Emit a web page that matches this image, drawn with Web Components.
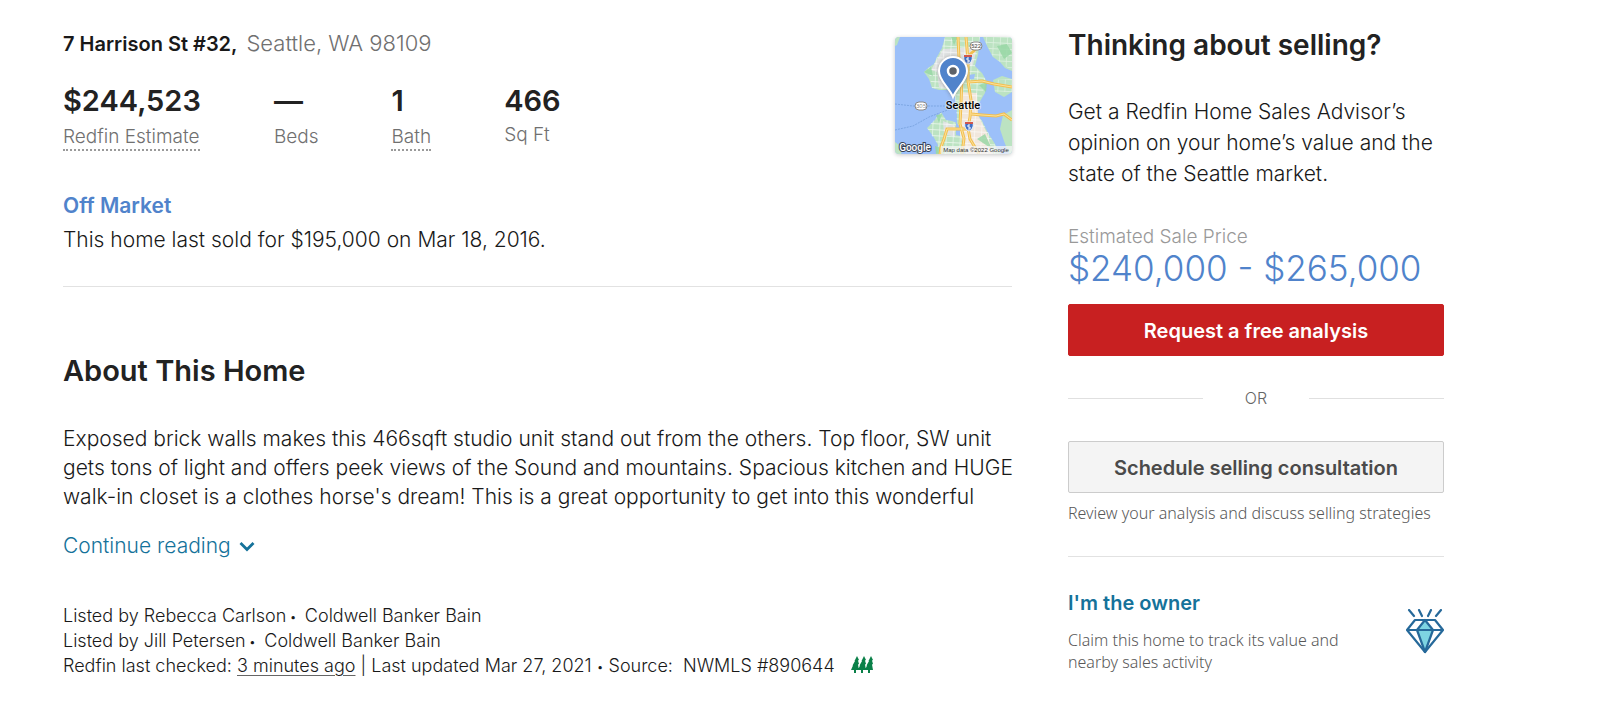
<!DOCTYPE html>
<html lang="en">
<head>
<meta charset="utf-8">
<meta name="viewport" content="width=device-width, initial-scale=1">
<title>7 Harrison St #32, Seattle, WA 98109</title>
<style>
  body { margin: 0; background: #fff; color: #191919; font: 300 21px/28px Inter, "Liberation Sans", sans-serif; }
</style>
</head>
<body>
<home-page>
  <home-summary slot="main">
    <span slot="street">7 Harrison St #32,</span>
    <span slot="city">Seattle, WA 98109</span>
    <home-stat slot="stats" value="$244,523" hint>Redfin Estimate</home-stat>
    <home-stat slot="stats" value="—">Beds</home-stat>
    <home-stat slot="stats" value="1" hint>Bath</home-stat>
    <home-stat slot="stats" value="466" tight>Sq Ft</home-stat>
    <home-map slot="map"></home-map>
    <span slot="status">Off Market</span>
    <span slot="history">This home last sold for $195,000 on Mar 18, 2016.</span>
  </home-summary>
  <home-about slot="main">
    Exposed brick walls makes this 466sqft studio unit stand out from the others. Top floor, SW unit gets tons of light and offers peek views of the Sound and mountains. Spacious kitchen and HUGE walk-in closet is a clothes horse's dream! This is a great opportunity to get into this wonderful
  </home-about>
  <home-listing slot="main"></home-listing>
  <sell-panel slot="side"></sell-panel>
  <owner-claim slot="side"></owner-claim>
</home-page>

<script>
function define(name, html) {
  const template = document.createElement('template');
  template.innerHTML = '<style>*{box-sizing:border-box}h2,p{margin:0}button{font:inherit;cursor:pointer}</style>' + html;
  customElements.define(name, class extends HTMLElement {
    constructor() {
      super();
      this.attachShadow({ mode: 'open' }).append(template.content.cloneNode(true));
    }
    connectedCallback() {
      const value = this.shadowRoot.querySelector('[data-value]');
      if (value) value.textContent = this.getAttribute('value');
    }
  });
}

define('home-page', `
<style>
  :host { display: grid; grid-template-columns: minmax(0, 1fr) 376px; gap: 56px; padding: 27px 156px 24px 63px; align-items: start; }
</style>
<main><slot name="main"></slot></main>
<aside><slot name="side"></slot></aside>`);

define('home-stat', `
<style>
  :host { display: flex; flex-direction: column; align-items: flex-start; gap: 6px; }
  :host([tight]) { gap: 4px; }
  strong { font-size: 29px; line-height: 36px; font-weight: 600; color: #222; }
  span { font-size: 19px; line-height: 24px; color: #707070; }
  :host([hint]) span { border-bottom: 2px dotted #9a9a9a; }
</style>
<strong data-value></strong><span><slot></slot></span>`);

define('home-summary', `
<style>
  :host { display: block; padding-bottom: 32px; border-bottom: 1px solid #e2e2e2; }
  .top { display: flex; justify-content: space-between; align-items: flex-start; }
  .map { padding-top: 10px; }
  .address { display: flex; align-items: baseline; gap: 9px; padding-top: 1px; font-size: 22px; line-height: 30px; color: #707070; }
  .street { font-size: 20px; line-height: 24px; font-weight: 600; color: #191919; }
  .stats { display: flex; align-items: flex-start; gap: 73px; margin-top: 25px; }
  .status { margin-top: 38px; font-weight: 600; color: #5083cb; }
  .history { margin-top: 6px; }
</style>
<div class="top">
  <div>
    <div class="address"><span class="street"><slot name="street"></slot></span><slot name="city"></slot></div>
    <div class="stats"><slot name="stats"></slot></div>
  </div>
  <div class="map"><slot name="map"></slot></div>
</div>
<div class="status"><slot name="status"></slot></div>
<div class="history"><slot name="history"></slot></div>`);

define('home-map', `
<style>
  :host { display: block; width: 117px; height: 117px; border-radius: 4px; overflow: hidden; box-shadow: 0 1px 4px rgba(0,0,0,.22); }
  svg { display: block; width: 100%; height: 100%; }
</style>
<svg viewBox="0 0 117 117" role="img" aria-label="Map of Seattle">
  <defs>
    <pattern id="grid" width="7" height="6" patternUnits="userSpaceOnUse" patternTransform="rotate(3)">
      <path d="M0 0H7M0 0V6" stroke="#fff" stroke-width="1.3" opacity=".75"/>
    </pattern>
    <filter id="soft" x="-50%" y="-50%" width="200%" height="200%"><feGaussianBlur stdDeviation="2"/></filter>
    <g id="shield"><path d="M-4-4H4C5 1 3 4 0 5C-3 4-5 1-4-4Z" fill="#3f6fc4" stroke="#eef3fb"/><path d="M-4-4H4V-2H-4Z" fill="#d2574c"/><path d="M1-1H-1V1H1V3H-1" fill="none" stroke="#fff"/></g>
  </defs>
  <path fill="#9cc0f9" d="M0 0H117V117H0Z"/>
  <g id="land" fill="#bce3c2">
    <path d="M50 0L47 11L42 20L39 27L33 31L29 35L34 42L37 51L44 53L53 53L60 60L62 76L62 86L57 84L51 83L46 75L39 84L32 91L38 99L43 108L41 117H105L100 107L93 96L87 84L82 77L84 66L90 56L91 43L87 36L80 29L83 18L85 0Z"/>
    <path d="M88 0H117V34L110 31L105 25L98 20L93 11Z"/>
    <path d="M98 43L107 39L117 42V55L109 60L100 55Z"/>
    <path d="M108 78L117 73V117H114L109 104L105 92Z"/>
    <path d="M0 0H5L2 8L0 9ZM0 105L8 111L6 117H0Z"/>
  </g>
  <g fill="#dfe2e2">
    <path d="M48 12L82 10L78 28L64 34L60 54L44 50L42 35L36 33Z"/>
    <path d="M48 84L60 89V100L49 97Z"/>
  </g>
  <path d="M65 55L82 56L83 78L92 96L98 117H71L67 105L64 90Z" fill="#f1e7dc"/>
  <path d="M50 0L47 11L42 20L39 27L33 31L37 51L53 53L60 60L62 86L51 83L46 75L32 91L43 108L41 117H105L87 84L82 77L91 43L80 29L85 0Z" fill="url(#grid)"/>
  <path d="M88 0H117V34L98 20ZM98 43L117 42V55L100 55Z" fill="url(#grid)" opacity=".7"/>
  <g fill="#95d6a3" opacity=".8">
    <path d="M29 35L36 30L38 39ZM56 0L63 0L59 8ZM84 48L92 45L91 55ZM41 78L47 77L44 86ZM82 102L90 97L97 112ZM40 109L50 112L49 117H41ZM102 9L112 7L117 16L109 22Z"/>
  </g>
  <path d="M55 37L66 39L80 37L79 42L67 43L64 52L59 47Z" fill="#9cc0f9"/>
  <path d="M61 85L65 90V99L61 98Z" fill="#9cc0f9"/>
  <path d="M0 67L18 69L60 69M0 93L18 89L34 80L58 71" fill="none" stroke="#7da6e2" stroke-dasharray="2 1"/>
  <g fill="none" stroke="#f2bf50" stroke-width="3">
    <path d="M63 0L64 22L67 40L66 67L65 87L69 101L67 117"/>
    <path d="M71 0L73 23L73 44L76 63L75 80L73 91L75 102L84 117"/>
    <path d="M74 45L87 44L99 47L117 50M76 77L87 78L101 79L109 77L117 83M74 92H52L49 102L46 110L45 117M72 20L81 12"/>
  </g>
  <g fill="none" stroke="#fce29a" stroke-width="1">
    <path d="M63 0L64 22L67 40L66 67L65 87L69 101L67 117M71 0L73 23L73 44L76 63L75 80L73 91L75 102L84 117M74 45L87 44L99 47L117 50M76 77L87 78L101 79L109 77L117 83M74 92H52L49 102L46 110L45 117"/>
  </g>
  <use href="#shield" x="73" y="22"/><use href="#shield" x="74" y="89"/>
  <g fill="#fff" stroke="#888" stroke-width="1"><rect x="75" y="5" width="12" height="8" rx="4"/><rect x="20" y="65" width="12" height="8" rx="4"/></g>
  <g font-family="Roboto, sans-serif" text-anchor="middle">
    <text x="81" y="11" font-size="6" font-weight="500" fill="#555">522</text>
    <text x="26" y="71" font-size="6" fill="#555">305</text>
    <text x="68" y="72" font-size="11" font-weight="500" fill="#000" stroke="#fff" stroke-width="2" stroke-opacity=".5" paint-order="stroke">Seattle</text>
    <text x="20" y="114" font-size="10" font-weight="500" fill="#fff" stroke="#3b4658" stroke-width="2" paint-order="stroke">Google</text>
    <path d="M46 109H117V117H46Z" fill="#f5f5f5" opacity=".75"/>
    <text x="81" y="115" font-size="6" font-family="Liberation Sans, sans-serif" fill="#333">Map data ©2022 Google</text>
  </g>
  <path d="M58 61C54 50 44 46 44 34A14 14 0 0 1 72 34C72 46 62 50 58 61Z" fill="#555" opacity=".65" filter="url(#soft)"/>
  <path d="M58 60C54 50 44 44 44 34A14 14 0 0 1 72 34C72 44 62 50 58 60Z" fill="#5083cb" stroke="#fff" stroke-width="2"/>
  <circle cx="58" cy="34" r="5" fill="#5d6268" stroke="#fff" stroke-width="2.5"/>
</svg>`);

define('home-about', `
<style>
  :host { display: block; padding-top: 66px; }
  h2 { font-size: 29px; line-height: 36px; font-weight: 600; color: #222; }
  p { margin: 35px -16px 0 0; line-height: 29px; }
  button { display: flex; align-items: center; gap: 8px; margin-top: 21px; padding: 0; border: 0; background: none; color: #15729a; }
  svg { width: 16px; height: 11px; }
</style>
<h2>About This Home</h2>
<p><slot></slot></p>
<button type="button">Continue reading<svg viewBox="0 0 16 11" aria-hidden="true"><path d="M1.500 2L8 8.500L14.500 2" fill="none" stroke="currentColor" stroke-width="2.800"/></svg></button>`);

define('home-listing', `
<style>
  :host { display: block; margin-top: 43px; font-size: 18px; line-height: 25px; }
  p { white-space: pre-wrap; }
  a { color: inherit; text-underline-offset: 3px; text-decoration-color: #666; }
  .dot { font-size: 12px; line-height: 12px; vertical-align: 1px; }
  svg { width: 23px; height: 17px; margin-left: 16px; vertical-align: -1px; }
</style>
<p>Listed by Rebecca Carlson<span class="dot"> • </span> Coldwell Banker Bain</p>
<p>Listed by Jill Petersen<span class="dot"> • </span> Coldwell Banker Bain</p>
<p>Redfin last checked: <a href="#checked">3 minutes ago</a> | Last updated Mar 27, 2021 <span class="dot">•</span> Source:  NWMLS #890644<svg viewBox="0 0 23 17" role="img" aria-label="NWMLS"><path fill="#0a8048" d="M6 0L8 4L7 4.500L8 8L7 8.500L8 14H5V17H3V14H0L2 9.500L1.500 9.500L4 5L3.500 5ZM13 0L15 4L14 4.500L15 8L14 8.500L15 14H12V17H10V14H7L9 9.500L8.500 9.500L11 5L10.500 5ZM20 0L22 4L21 4.500L22 8L21 8.500L22 14H19V17H17V14H14L16 9.500L15.500 9.500L18 5L17.500 5Z"/></svg></p>`);

define('action-button', `
<style>
  :host { display: block; }
  button { width: 100%; height: 52px; padding: 2px 0 0; border: 1px solid #c82021; border-radius: 2px; background: #c82021; color: #fff; font-size: 20px; font-weight: 600; }
  :host([plain]) button { border-color: #ccc; background: #f4f4f4; color: #4a4a4a; }
</style>
<button type="button"><slot></slot></button>`);

define('sell-panel', `
<style>
  :host { display: block; padding-bottom: 32px; border-bottom: 1px solid #e2e2e2; }
  h2 { font-size: 28px; line-height: 36px; font-weight: 600; color: #222; }
  .pitch { margin-top: 33px; line-height: 31px; }
  .label { margin-top: 36px; font-size: 19px; line-height: 24px; color: #999; }
  .price { margin-bottom: 16px; font-size: 35px; line-height: 39px; color: #5083cb; }
  .or { display: flex; align-items: center; gap: 42px; margin: 30px 0 31px; font-size: 16px; line-height: 24px; color: #666; }
  .or::before, .or::after { content: ""; flex: 1; height: 1px; background: #e0e0e0; }
  .note { margin-top: 9px; font: 300 16px/22px "Noto Sans", sans-serif; color: #585858; }
</style>
<h2>Thinking about selling?</h2>
<p class="pitch">Get a Redfin Home Sales Advisor’s opinion on your home’s value and the state of the Seattle market.</p>
<p class="label">Estimated Sale Price</p>
<p class="price">$240,000 - $265,000</p>
<action-button>Request a free analysis</action-button>
<div class="or">OR</div>
<action-button plain>Schedule selling consultation</action-button>
<p class="note">Review your analysis and discuss selling strategies</p>`);

define('owner-claim', `
<style>
  :host { display: flex; justify-content: space-between; align-items: center; padding-top: 32px; }
  a { display: block; font-size: 20px; line-height: 28px; font-weight: 600; color: #15729a; text-decoration: none; }
  p { max-width: 290px; margin-top: 12px; font: 300 16px/22px "Noto Sans", sans-serif; color: #585858; }
  svg { flex: none; width: 38px; height: 45px; }
</style>
<div>
  <a href="#owner">I'm the owner</a>
  <p>Claim this home to track its value and nearby sales activity</p>
</div>
<svg viewBox="0 0 38 45" aria-hidden="true" fill="none" stroke="#26699a" stroke-width="2.200" stroke-linejoin="round" stroke-linecap="round">
  <path d="M19 11L27 21L19 43L11 21Z" fill="#7dd4e2"/>
  <path d="M9 11H29L37 21L19 43L1 21ZM1 21H37"/>
  <path d="M3 1L8 7M13 1L16 7M25 1L22 7M35 1L30 7"/>
</svg>`);
</script>
</body>
</html>
